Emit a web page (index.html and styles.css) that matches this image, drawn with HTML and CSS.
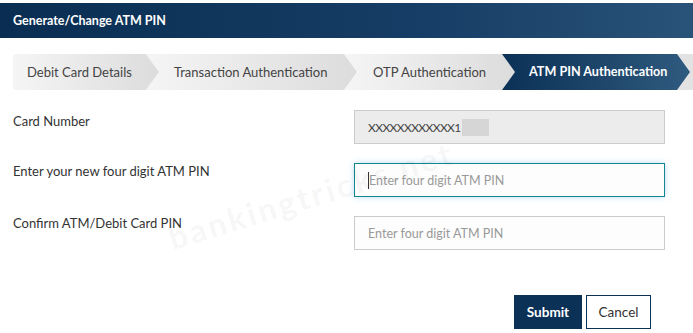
FILE: index.html
```html
<!DOCTYPE html>
<html>
<head>
<meta charset="utf-8">
<link rel="stylesheet" href="styles.css">
</head>
<body>
<div class="page">
  <div class="header">Generate/Change ATM PIN</div>
  <div class="steps">
    <div class="step step-first step-w1">Debit Card Details</div>
    <div class="step step-w2">Transaction Authentication</div>
    <div class="step step-w3">OTP Authentication</div>
    <div class="step step-active step-w4">ATM PIN Authentication</div>
  </div>
  <div class="form">
    <div class="row">
      <label class="label label-1">Card Number</label>
      <div class="input input-disabled"><span>XXXXXXXXXXXX1</span><span class="mask"></span></div>
    </div>
    <div class="row">
      <label class="label label-2">Enter your new four digit ATM PIN</label>
      <div class="input input-focus"><span class="caret"></span><span class="ph">Enter four digit ATM PIN</span></div>
    </div>
    <div class="row">
      <label class="label label-3">Confirm ATM/Debit Card PIN</label>
      <div class="input"><span class="ph">Enter four digit ATM PIN</span></div>
    </div>
  </div>
  <div class="actions">
    <button class="btn btn-primary">Submit</button>
    <button class="btn btn-secondary">Cancel</button>
  </div>
  <div class="watermark">bankingtricks.net</div>
</div>
</body>
</html>
```
FILE: styles.css
```css
* { box-sizing: border-box; }
html, body { margin: 0; padding: 0; background: #fff; }
body {
  font-family: "Lato", "Open Sans", sans-serif;
  color: #333;
  width: 693px;
  height: 333px;
  overflow: hidden;
}
.page { position: relative; padding-top: 3px; }
.header {
  height: 35px;
  line-height: 35px;
  padding-left: 13px;
  color: #fff;
  font-size: 12.5px;
  font-weight: 700;
  background: linear-gradient(90deg, #0a2e52 0%, #163d65 60%, #2a5379 100%);
}
.steps {
  display: flex;
  margin: 16px 0 0 13px;
  height: 36px;
  background: linear-gradient(90deg, #f0f0f0, #e2e2e2);
  border-radius: 4px 0 0 4px;
}
.step {
  height: 36px;
  line-height: 36px;
  font-size: 13px;
  color: #444;
  padding-left: 27px;
  margin-left: -13px;
  white-space: nowrap;
  background: linear-gradient(90deg, #f5f5f5 0%, #dcdcdc 100%);
  clip-path: polygon(0 0, calc(100% - 13px) 0, 100% 50%, calc(100% - 13px) 100%, 0 100%, 13px 50%);
}
.step-first {
  margin-left: 0;
  padding-left: 14px;
  border-radius: 4px 0 0 4px;
  clip-path: polygon(0 0, calc(100% - 13px) 0, 100% 50%, calc(100% - 13px) 100%, 0 100%);
}
.step-w1 { width: 146px; }
.step-w2 { width: 211px; padding-left: 28px; }
.step-w3 { width: 171px; padding-left: 29px; }
.step-w4 { width: 188px; padding-left: 27px; }
.step-active {
  color: #fff;
  font-weight: 700;
  font-size: 12.6px;
  background: linear-gradient(90deg, #0b3156 0%, #1d4569 50%, #2f5a7f 100%);
}
.form { margin-top: 20px; }
.row {
  display: grid;
  grid-template-columns: 341px 311px;
  align-items: start;
  padding-left: 13px;
  margin-bottom: 19px;
}
.label {
  font-size: 13px;
  line-height: 22px;
  color: #333;
}
.label-1 { margin-top: 0; }
.label-2 { margin-top: -3px; }
.label-3 { margin-top: -4px; }
.input {
  height: 34px;
  border: 1px solid #cccccc;
  background: #fdfdfd;
  display: flex;
  align-items: center;
  padding-left: 13px;
  font-size: 12.5px;
  position: relative;
}
.input-disabled {
  background: #ececec;
  color: #444;
  font-size: 12px;
  letter-spacing: -0.6px;
}
.mask {
  display: inline-block;
  width: 27px;
  height: 17px;
  background: #d6d6d6;
  margin-left: 1px;
}
.input-focus {
  border-color: #13868f;
  box-shadow: 0 0 6px rgba(102, 175, 233, 0.45);
}
.caret {
  display: inline-block;
  width: 1px;
  height: 17px;
  background: #333;
}
.ph { color: #999; }
.actions {
  display: flex;
  justify-content: flex-end;
  gap: 4px;
  padding-right: 42px;
  margin-top: 45px;
}
.btn {
  height: 34px;
  font-family: inherit;
  font-size: 13.5px;
  border-radius: 0;
  cursor: pointer;
}
.btn-primary {
  width: 68px;
  background: #0b3156;
  color: #fff;
  border: 1px solid #0b3156;
  font-weight: 700;
}
.btn-secondary {
  width: 65px;
  background: #fff;
  color: #333;
  border: 1.5px solid #0b3156;
}
.watermark {
  position: absolute;
  left: 174px;
  top: 222px;
  line-height: 32px;
  font-size: 32px;
  font-weight: 700;
  letter-spacing: 3px;
  color: rgba(0, 0, 0, 0.055);
  transform: rotate(-17deg);
  transform-origin: left bottom;
  pointer-events: none;
  white-space: nowrap;
}
```
